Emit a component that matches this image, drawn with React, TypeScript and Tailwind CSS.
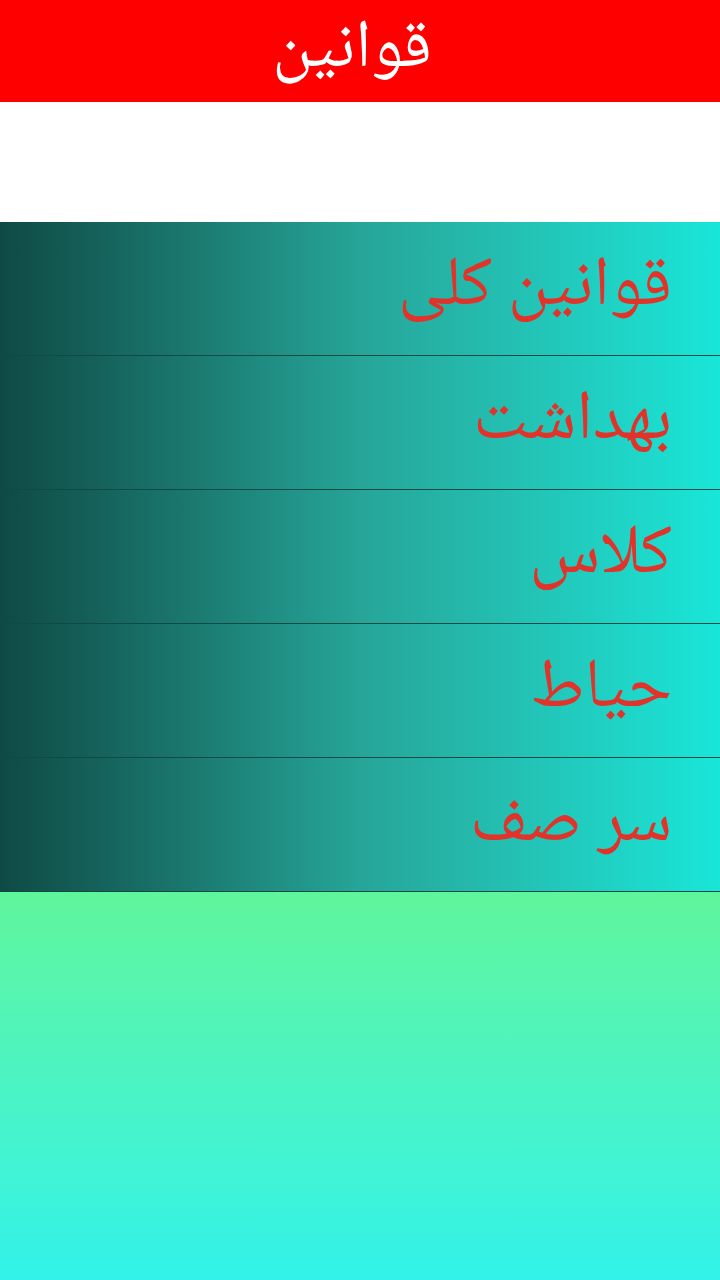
const items = ['قوانین کلی', 'بهداشت', 'کلاس', 'حیاط', 'سر صف'];

export default function App() {
  return (
    <div
      dir="rtl"
      className="flex h-[1280px] w-[720px] flex-col overflow-hidden"
      style={{ fontFamily: '"Noto Naskh Arabic", "Noto Sans Arabic", "DejaVu Sans", sans-serif' }}
    >
      <header className="flex h-[102px] shrink-0 items-center justify-center bg-[#fe0000] pr-4">
        <h1 className="text-[68px] leading-[100px] text-white">قوانین</h1>
      </header>

      <div className="h-[120px] shrink-0 bg-white" />

      <ul className="shrink-0">
        {items.map((item) => (
          <li
            key={item}
            className="flex h-[134px] items-center border-b border-[#0f4a44] bg-gradient-to-l from-[#18e6d8] via-[#26a598] to-[#0f4a45] pr-12"
          >
            <span className="text-[70px] leading-[1.4] text-[#e2332b]">{item}</span>
          </li>
        ))}
      </ul>

      <div className="flex-1 bg-gradient-to-b from-[#5ff59b] to-[#31f2e9]" />
    </div>
  );
}
